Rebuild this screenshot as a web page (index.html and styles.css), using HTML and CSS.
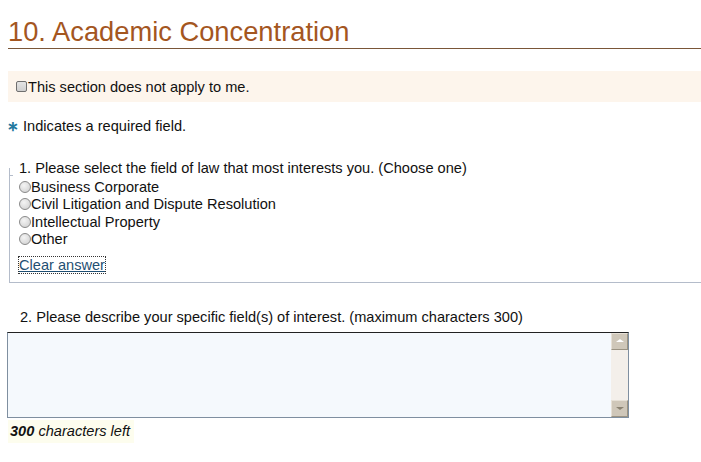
FILE: index.html
```html
<html>

<head>
    <link rel="stylesheet" href="styles.css">
</head>

<body>
    <h1 class="titel">10. Academic Concentration</h1>

    <div class="ikkeAktuelt">
        <input id="chkIkke" type="checkbox" /><label for="chkIkke">This section does not apply to me.</label>
    </div>

    <div class="paakrevd"><span class="stjerne">&#8727;</span> Indicates a required field.</div>

    <fieldset class="spors">
        <legend>1. Please select the field of law that most interests you. (Choose one)</legend>
        <div class="valg"><input id="r1" type="radio" name="felt" /><label for="r1">Business Corporate</label></div>
        <div class="valg"><input id="r2" type="radio" name="felt" /><label for="r2">Civil Litigation and Dispute Resolution</label></div>
        <div class="valg"><input id="r3" type="radio" name="felt" /><label for="r3">Intellectual Property</label></div>
        <div class="valg"><input id="r4" type="radio" name="felt" /><label for="r4">Other</label></div>
        <a class="tomSvar" href="#">Clear answer</a>
    </fieldset>

    <div class="sporsTekst">2. Please describe your specific field(s) of interest. (maximum characters 300)</div>
    <div class="tekstfelt">
        <div class="skrive"></div>
        <div class="rull">
            <span class="knapp opp"></span>
            <span class="knapp ned"></span>
        </div>
    </div>
    <div class="igjen"><b>300</b> characters left</div>
</body>

</html>
```

FILE: styles.css
```css
body {
    margin: 0;
    padding: 0 0 0 8px;
    font-family: "Liberation Sans", Arial, sans-serif;
    font-size: 14.6px;
    color: #111;
    background: #fff;
    overflow: hidden;
}

.titel {
    margin: 0;
    padding-top: 16px;
    font-size: 27.3px;
    font-weight: normal;
    line-height: 32px;
    color: #a4561f;
    border-bottom: 1px solid #7a5638;
    padding-bottom: 0;
}

.ikkeAktuelt {
    margin-top: 22px;
    height: 31px;
    background: #fdf5ec;
    display: flex;
    align-items: center;
    padding-left: 8px;
}

.ikkeAktuelt input {
    appearance: none;
    margin: 0 1px 0 0;
    width: 11px;
    height: 11px;
    border: 1px solid #6f6f6f;
    border-radius: 2px;
    background: linear-gradient(#e4e4e4, #cfcfcf);
}

.paakrevd {
    margin-top: 16px;
    margin-left: -1px;
}

.stjerne {
    color: #23799f;
    font-weight: bold;
    font-size: 14px;
}

.spors {
    margin: 26px 0 0 1px;
    padding: 0 0 9px 9px;
    border: 1px solid #b4bcca;
    border-top: none;
    border-right: none;
    position: relative;
}

.spors legend {
    padding: 0 2px 0 1px;
    margin-left: -1px;
}

.spors::before {
    content: "";
    position: absolute;
    left: -1px;
    top: -1px;
    width: 4px;
    border-top: 1px solid #b4bcca;
}

.valg {
    display: flex;
    align-items: center;
    height: 17.5px;
}

.valg:first-of-type {
    margin-top: 2px;
}

.valg input {
    appearance: none;
    margin: 0;
    width: 12px;
    height: 12px;
    border: 1px solid #8a8a8a;
    border-radius: 50%;
    background: radial-gradient(circle at 40% 35%, #f4f4f4, #cdcdcd);
    box-sizing: border-box;
}

.tomSvar {
    display: inline-block;
    margin-top: 9px;
    color: #1f4f73;
    outline: 1px dotted #333;
    line-height: 16px;
}

.sporsTekst {
    margin: 26px 0 0 12px;
}

.tekstfelt {
    margin-top: 7px;
    margin-left: -1px;
    width: 620px;
    height: 84px;
    display: flex;
    border: 1px solid #7f8fa0;
    border-top-color: #222;
    background: #f5f9fd;
}

.skrive {
    flex: 1;
}

.rull {
    width: 17px;
    background: #f3efea;
    display: flex;
    flex-direction: column;
    justify-content: space-between;
}

.knapp {
    height: 17px;
    background: #cfc7b9;
    border: 1px solid #e6e0d6;
    border-right-color: #9b9383;
    border-bottom-color: #9b9383;
    box-sizing: border-box;
    position: relative;
}

.knapp::after {
    content: "";
    position: absolute;
    left: 4px;
    border-left: 4px solid transparent;
    border-right: 4px solid transparent;
}

.opp::after {
    top: 5px;
    border-bottom: 3px solid #fff;
}

.ned::after {
    top: 6px;
    border-top: 3px solid #8a8272;
}

.igjen {
    display: inline-block;
    margin-top: 2px;
    padding: 3px 4px 4px 2px;
    font-style: italic;
    background: #fdfdee;
}
```
